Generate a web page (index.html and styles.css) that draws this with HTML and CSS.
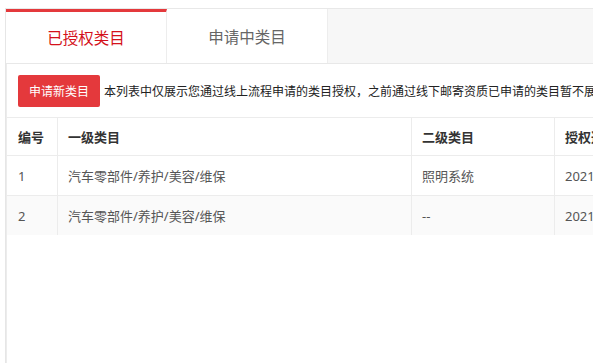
FILE: index.html
```html
<!DOCTYPE html>
<html lang="zh-CN">
<head>
<meta charset="utf-8">
<title>类目管理</title>
<link rel="stylesheet" href="styles.css">
</head>
<body>
<div class="page">
  <div class="panel">
    <div class="tabs">
      <div class="tab active">已授权类目</div>
      <div class="tab">申请中类目</div>
      <div class="tab-fill"></div>
    </div>
    <div class="content">
      <div class="toolbar">
        <button class="btn-apply" type="button">申请新类目</button>
        <span class="note">本列表中仅展示您通过线上流程申请的类目授权，之前通过线下邮寄资质已申请的类目暂不展示</span>
      </div>
      <div class="table">
        <div class="row head">
          <div class="cell c1">编号</div>
          <div class="cell">一级类目</div>
          <div class="cell">二级类目</div>
          <div class="cell">授权通过时间</div>
        </div>
        <div class="row">
          <div class="cell c1">1</div>
          <div class="cell">汽车零部件/养护/美容/维保</div>
          <div class="cell">照明系统</div>
          <div class="cell">2021-03-15 10:26:31</div>
        </div>
        <div class="row alt last">
          <div class="cell c1">2</div>
          <div class="cell">汽车零部件/养护/美容/维保</div>
          <div class="cell">--</div>
          <div class="cell">2021-03-15 10:26:31</div>
        </div>
      </div>
    </div>
  </div>
</div>
</body>
</html>
```

FILE: styles.css
```css
html, body {
  margin: 0;
  padding: 0;
  overflow: hidden;
  background: #fff;
}

body {
  font-family: "Noto Sans", "Noto Sans CJK SC", sans-serif;
  color: #333;
}

.page {
  width: 1100px;
  height: 363px;
  padding: 8px 0 0 5px;
  box-sizing: border-box;
}

.panel {
  height: 100%;
  border-top: 1px solid #e8e8e8;
  border-left: 1px solid #e6e6e6;
  display: flex;
  flex-direction: column;
}

.tabs {
  display: flex;
  height: 54px;
  background: #f7f7f7;
  border-bottom: 1px solid #e8e8e8;
}

.tab {
  width: 160px;
  height: 54px;
  background: #fff;
  border-right: 1px solid #ededed;
  font-size: 15.5px;
  color: #666;
  display: flex;
  align-items: center;
  justify-content: center;
  box-sizing: content-box;
}

.tab.active {
  height: 51px;
  border-top: 3px solid #e4393c;
  color: #d4111b;
}

.tab-fill {
  flex: 1;
}

.content {
  flex: 1;
  border-left: 1px solid #ececec;
}

.toolbar {
  display: flex;
  align-items: center;
  padding: 11px 11px 10px;
}

.btn-apply {
  width: 82px;
  height: 32px;
  flex: none;
  border: none;
  border-radius: 2px;
  background: #e4393c;
  color: #fff;
  font-family: inherit;
  font-size: 12px;
  padding: 0;
}

.note {
  margin-left: 4px;
  font-size: 12px;
  color: #222;
  white-space: nowrap;
}

.table {
  border-top: 1px solid #ececec;
  font-size: 13px;
}

.row {
  display: grid;
  grid-template-columns: 51px 354px 143px 1fr;
  height: 40px;
  border-bottom: 1px solid #ececec;
  box-sizing: border-box;
  color: #555;
}

.row.head {
  height: 38px;
  color: #333;
  font-weight: bold;
}

.row.alt {
  background: #fafafa;
}

.row.last {
  border-bottom: none;
  height: 39px;
}

.cell {
  display: flex;
  align-items: center;
  padding: 0 10px;
  border-right: 1px solid #ececec;
  white-space: nowrap;
  overflow: hidden;
}

.cell.c1 {
  padding-left: 11px;
}
```
